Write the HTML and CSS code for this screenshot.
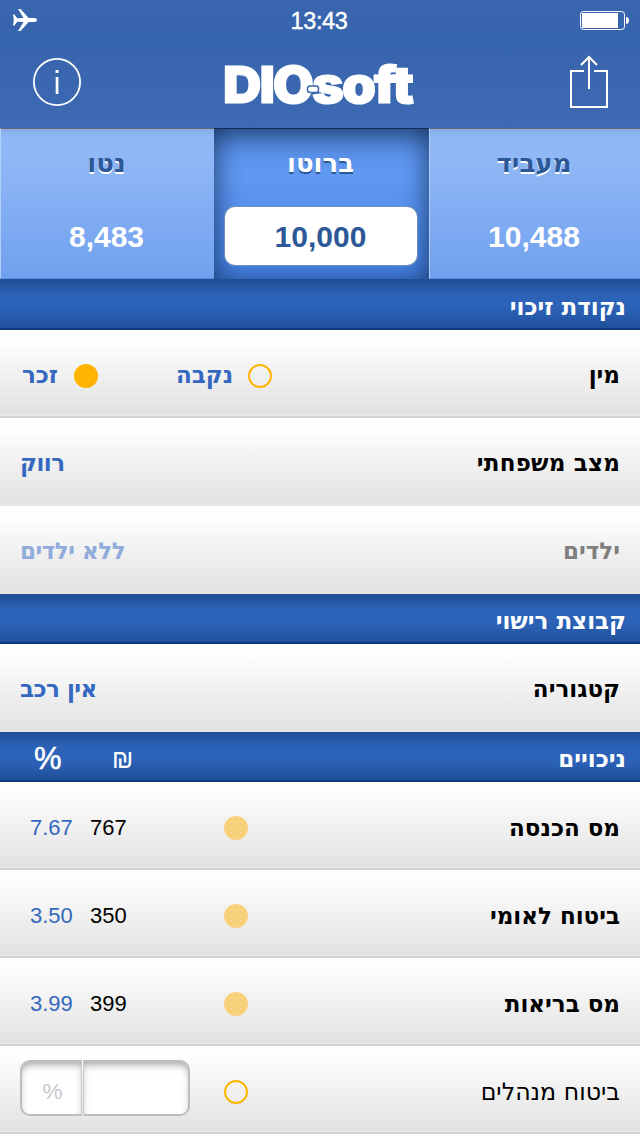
FILE: index.html
```html
<!DOCTYPE html>
<html lang="he">
<head>
<meta charset="utf-8">
<title>DIO-soft</title>
<link rel="stylesheet" href="styles.css">
</head>
<body>
<header class="header">
  <div class="status">
    <svg class="plane" width="26" height="24" viewBox="0 0 26 24"><path fill="#fff" d="M1 6.500h1.500l2.700 3.700 6.300-.2L6 1h2.600l8 9h5.600c1.800 0 2.800.8 2.800 2s-1 2-2.800 2h-5.600l-8 9H6l5.500-9-6.300-.2-2.700 3.700H1l.8-5.500z"/></svg>
    <span class="clock">13:43</span>
    <svg class="battery" width="49" height="20" viewBox="0 0 49 20"><rect x=".5" y=".5" width="44" height="18" rx="3" fill="none" stroke="#fff"/><rect x="2" y="2" width="36" height="15" fill="#fff"/><path fill="#fff" d="M46 6c4 0 4 7 0 7z"/></svg>
  </div>
  <div class="nav">
    <svg class="info" width="48" height="48" viewBox="0 0 48 48"><circle cx="24" cy="24" r="23.100" fill="none" stroke="#fff" stroke-width="1.800"/><path fill="#fff" d="M22.500 12h3v3h-3zM22.700 19h2.700v17h-2.700z"/></svg>
    <svg class="logo" width="206" height="76" viewBox="0 0 206 76">
      <text x="5" y="57" class="logo-text" textLength="89" lengthAdjust="spacingAndGlyphs">DIO</text>
      <text x="94" y="57" class="logo-text" textLength="100" lengthAdjust="spacingAndGlyphs">soft</text>
      <rect x="89.500" y="40" width="11" height="6.500" rx="2.500" fill="#fff" stroke="#3966ae" stroke-width="1.500"/>
    </svg>
    <svg class="share" width="40" height="54" viewBox="0 0 40 54"><path fill="none" stroke="#fff" stroke-width="2" d="M15 16H2v36h36V16H25M20 34V2M12 10l8-8 8 8"/></svg>
  </div>
</header>

<div class="tabs">
  <div class="tab"><span class="tab-title">נטו</span><span class="tab-value">8,483</span></div>
  <div class="tab active"><span class="tab-title">ברוטו</span><span class="tab-value">10,000</span></div>
  <div class="tab"><span class="tab-title">מעביד</span><span class="tab-value">10,488</span></div>
</div>

<div class="section first"><span class="label">נקודת זיכוי</span></div>
<div class="row">
  <span class="value male">זכר</span><i class="radio on"></i>
  <span class="value female">נקבה</span><i class="radio"></i>
  <span class="label">מין</span>
</div>
<div class="row plain"><span class="value">רווק</span><span class="label wide">מצב משפחתי</span></div>
<div class="row plain disabled"><span class="value">ללא ילדים</span><span class="label">ילדים</span></div>

<div class="section"><span class="label">קבוצת רישוי</span></div>
<div class="row plain"><span class="value">אין רכב</span><span class="label">קטגוריה</span></div>

<div class="section"><span class="percent">%</span><span class="shekel">₪</span><span class="label">ניכויים</span></div>
<div class="row deduction"><span class="rate">7.67</span><span class="sum">767</span><i class="radio locked"></i><span class="label">מס הכנסה</span></div>
<div class="row deduction"><span class="rate">3.50</span><span class="sum">350</span><i class="radio locked"></i><span class="label">ביטוח לאומי</span></div>
<div class="row deduction"><span class="rate">3.99</span><span class="sum">399</span><i class="radio locked"></i><span class="label">מס בריאות</span></div>
<div class="row deduction">
  <div class="fields"><span class="field rate-field">%</span><span class="field sum-field"></span></div>
  <i class="radio"></i><span class="label regular">ביטוח מנהלים</span>
</div>
</body>
</html>
```
FILE: styles.css
```css
* { box-sizing: border-box; }
body {
  margin: 0;
  width: 640px;
  height: 1136px;
  overflow: hidden;
  background: #fff;
  font-family: "Liberation Sans", Arial, sans-serif;
}
.header {
  height: 128px;
  background: linear-gradient(#3966ae 0, #3664ad 40px, #3e6ab3 128px);
}
.status { display: flex; height: 40px; padding: 0 11px 0 12px; justify-content: space-between; align-items: center; }
.plane { margin-right: 20px; }
.battery { margin-top: 2px; }
.clock { color: #fff; font-size: 23.500px; letter-spacing: -.4px; -webkit-text-stroke: .4px #fff; padding-top: 2px; }
.nav { display: flex; height: 88px; padding: 0 31px 0 33px; justify-content: space-between; align-items: center; }
.info { margin-top: -4px; }
.logo { margin: 0 0 0 -8px; }
.logo-text { font-family: Inter, sans-serif; font-weight: 900; font-size: 51px; fill: #fff; stroke: #fff; stroke-width: 1.200px; letter-spacing: -2px; }
.share { margin-top: -4px; }

.tabs { display: grid; grid-template-columns: 214px 215px 211px; height: 151px; }
.tab {
  display: flex; flex-direction: column; align-items: center;
  padding-top: 17px;
  color: #2c5898;
  border-top: 1px solid #67686f;
  border-left: 1px solid #b0cffa;
  border-bottom: 1px solid #608fdd;
  background: linear-gradient(#86abe9 0, #90b8f7 8px, #8fb7f6 35px, #70a0ee 100%);
}
.tab-title { font: bold 26px/34px "DejaVu Sans", sans-serif; margin-right: 2px; text-shadow: 0 2px 0 #fff; }
.tab-value {
  display: flex; align-items: center; justify-content: center;
  width: 192px; height: 58px; margin: 27px 2px 0 0;
  border-radius: 10px;
  padding-top: 2px;
  font-size: 30px; font-weight: bold; color: #fff;
}
.active {
  color: #fff; border: 0; border-top: 1px solid #122c55;
  background: linear-gradient(#5b95f0, #6098f2 50px, #4380e5);
  box-shadow: inset 0 6px 28px #183663;
}
.active .tab-title { text-shadow: 0 2px 0 #2c5898; }
.active .tab-value { background: #fff; color: #2c5898; box-shadow: 0 0 0 1px #6e8fc0; }

.section {
  display: flex; align-items: center;
  height: 50px; padding: 5px 14px 0 34px;
  color: #fff;
  border-bottom: 2px solid #0f377c;
  background: linear-gradient(#1f4e95 0, #2c63b8 16px, #2c63b8 28px, #20509a 100%);
}
.section.first { height: 51px; padding-top: 7px; }
.percent { font-size: 31px; width: 78px; -webkit-text-stroke: .5px #fff; }
.shekel { font-size: 25px; padding-top: 2px; }
.label, .value { font: bold 23px/32px "DejaVu Sans", sans-serif; white-space: nowrap; }
.label { margin-left: auto; }
.wide { letter-spacing: .2px; }

.row {
  display: flex; align-items: center;
  height: 88px; padding: 4px 20px 0;
  border-bottom: 2px solid #d2d2d2;
  background: linear-gradient(#fff 0, #fdfdfd 12px, #e2e2e2 84px, #e8e8e8 84px);
}
.plain { border-bottom: 0; padding-bottom: 2px; background: linear-gradient(#fff 0, #fdfdfd 12px, #e2e2e2 86px, #e7e7e7 86px); }
.row > * { flex-shrink: 0; }
.value { color: #3468c0; }
.plain .value { letter-spacing: -.5px; }
.male { width: 54px; padding-left: 2px; }
.female { width: 92px; margin-left: 58px; padding-left: 20px; }
.disabled .label { color: #7f7f7f; }
.disabled .value { color: #91abdb; }
.deduction .label { padding-top: 2px; }
.deduction .regular { font-weight: 400; font-size: 23.700px; }
.radio { width: 24px; height: 24px; margin-top: 2px; border: 2px solid #ffb400; border-radius: 50%; }
.on { background: #ffb400; }
.locked { background: #f8d27a; border-color: #f8d27a; }
.rate, .sum { font-size: 22px; padding-top: 2px; }
.rate { color: #3468c0; margin-left: 10px; width: 60px; }
.sum { color: #000; width: 134px; }

.fields { display: flex; width: 204px; height: 56px; margin-top: -6px; }
.field { border: 2px solid #bdbdbd; background: #fff; box-shadow: inset 0 5px 8px -3px #999; }
.rate-field { width: 62px; border-right: 1px solid #c8c8c8; border-radius: 10px 0 0 10px; color: #c7c7cd; font-size: 22.500px; line-height: 59px; text-align: center; padding-left: 2px; }
.sum-field { width: 107px; margin-left: 1px; border-left: 1px solid #c8c8c8; border-radius: 0 10px 10px 0; }
```
